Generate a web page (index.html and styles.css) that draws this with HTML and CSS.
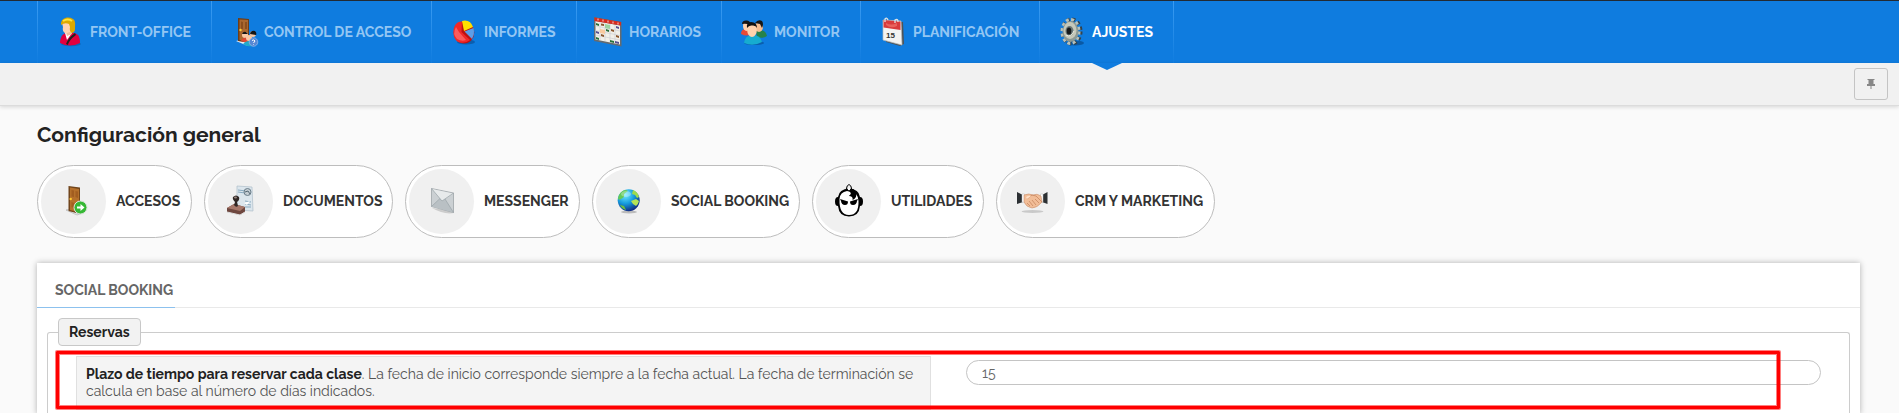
FILE: index.html
```html
<!DOCTYPE html>
<html lang="es">
<head>
<meta charset="utf-8">
<meta name="viewport" content="width=device-width, initial-scale=1">
<title>Configuración general</title>
<link rel="stylesheet" href="styles.css">
</head>
<body>
<nav class="topnav">
  <a class="nav-item" href="#">
    <svg class="icon" viewBox="0 0 32 32" aria-hidden="true">
      <ellipse cx="17" cy="28" rx="10" ry="2.200" fill="#08509a" opacity=".5"/>
      <path d="M6 27C6 22 8 18 12 17L20 17C25 18 26 22 26 27Q16 32 6 27Z" fill="#e3003f"/>
      <path d="M11 17L13 24L18 17Z" fill="#fff"/>
      <path d="M12 28Q14 22 21 17L22 19Q15 24 14 29Z" fill="#222"/>
      <path d="M11 13L18 12L18 18L13 20Z" fill="#f2bd99"/>
      <path d="M8 7Q14 2 19 7L18 14Q15 18 11 17Q8 15 9 11Z" fill="#ffd3b4"/>
      <path d="M7 8C7 2 14 0 19 3C22 5 21 9 21 13Q21 16 18 17Q15 15 16 11L15 8Q11 6 7 9Z" fill="#dca900"/>
      <path d="M9 5Q14 2 18 5" stroke="#ffe43b" stroke-width="2" fill="none"/>
    </svg>
    <span>FRONT-OFFICE</span></a>
  <a class="nav-item" href="#">
    <svg class="icon" viewBox="0 0 32 32" aria-hidden="true">
      <path d="M8 25L20 30L24 28L13 24Z" fill="#e8eef2"/>
      <path d="M10 2L21 3V27L10 25Z" fill="#6f3d17"/>
      <path d="M11.500 3.500L20 4V26L11.500 24Z" fill="#a9672f"/>
      <path d="M13 5.500L15 6V13H13ZM17 6H19V13H17Z" fill="#8b4e1e"/>
      <circle cx="12.500" cy="14" r="1.200" fill="#ffcf33"/>
      <circle cx="17" cy="19" r="3" fill="#f9c8a4"/><path d="M14 18Q15 15 18 16L20 18Z" fill="#151515"/>
      <circle cx="25" cy="18" r="3" fill="#f9c8a4"/><path d="M22 18Q23 14 27 15Q29 17 28 19Z" fill="#151515"/>
      <path d="M13 25Q15 21 19 22L19 27Z" fill="#df4934"/>
      <circle cx="21" cy="22" r="3" fill="#f9c8a4"/>
      <path d="M15 28Q19 23 25 26L24 30Q18 31 15 28Z" fill="#21aacc"/>
      <circle cx="25.500" cy="26" r="4.300" fill="#5788d4" stroke="#a8c5ee" stroke-width=".6"/>
      <path d="M24 24.500Q26 23 27 25L25.500 27M25.500 28.500V29" stroke="#fff" fill="none"/>
    </svg>
    <span>CONTROL DE ACCESO</span></a>
  <a class="nav-item" href="#">
    <svg class="icon" viewBox="0 0 32 32" aria-hidden="true">
      <ellipse cx="18" cy="26" rx="9" ry="2.500" fill="#07427f" opacity=".5"/>
      <ellipse cx="16" cy="16.500" rx="10.300" ry="11" fill="#bd1111"/>
      <path d="M14 5.500C3 5 3 25 12 26.500Q18 27.500 22 24L13.500 16Z" fill="#f22727"/>
      <path d="M8 11Q4 18 9 23Q14 26 18 24L11 16Z" fill="#ff7474" opacity=".7"/>
      <path d="M14 5Q22 3 25 11L16 15Z" fill="#ffdf00"/>
      <path d="M25.500 12Q27 18 24 23L16.500 15.500Z" fill="#5d9ee8"/>
    </svg>
    <span>INFORMES</span></a>
  <a class="nav-item" href="#">
    <svg class="icon" viewBox="0 0 32 32" aria-hidden="true">
      <path d="M1 1L28.500 6V30.500L1 25Z" fill="#656b70"/>
      <path d="M2.500 5L27 9.500V28.500L2.500 23.500Z" fill="#f2f0e9"/>
      <path d="M1.500 1.500L28 6V9.500L1.500 5Z" fill="#d62c20"/>
      <path d="M5 2.500V4.500M10 3.500V5.500M15 4.500V6.500M20 5.500V7.500M25 6.500V8.500" stroke="#fff" stroke-width=".8"/>
      <path d="M7 6V24M12 7V25M17 8V26M22 9V27M2.500 10L27 15M2.500 14.500L27 19.500M2.500 19L27 24" stroke="#c8cbd2" stroke-width=".6"/>
      <path d="M3 7L6 8V10L3 9ZM13 13L16 14V16L13 15ZM3 21L6 22V24L3 23ZM17 24L21 25V27L17 26Z" fill="#28713c"/>
      <path d="M8 7.500L11 8V10L8 9.500ZM18 13L21 14V16L18 15ZM8 18L11 19V21L8 20ZM23 19L26 20V22L23 21Z" fill="#8c582f"/>
      <path d="M23 10L26 11V13L23 12ZM3 15L6 16V18L3 17ZM22 25L26 26V28L22 27Z" fill="#564f91"/>
      <path d="M12 8L17 9V13L12 12Z" fill="#9cd3a1"/><path d="M7 13L12 14V18L7 17Z" fill="#f8caa0"/>
    </svg>
    <span>HORARIOS</span></a>
  <a class="nav-item" href="#">
    <svg class="icon" viewBox="0 0 32 32" aria-hidden="true">
      <ellipse cx="16" cy="27" rx="10" ry="2" fill="#08427b" opacity=".5"/>
      <path d="M3 18Q3 13 8 13L13 18Q9 21 3 18Z" fill="#e84a35"/>
      <path d="M18 15Q27 12 29 20Q25 23 19 21Z" fill="#26824b"/>
      <ellipse cx="8.500" cy="10" rx="3.500" ry="5" fill="#ffd1ac"/>
      <path d="M4 8Q4 4 9 4.500Q13 5 12 9Q8 7 4 8Z" fill="#161616"/>
      <ellipse cx="21" cy="11" rx="4" ry="5" fill="#f7bd90"/>
      <path d="M17 7Q20 3 24 5Q26 8 24 12Q23 10 22 8Z" fill="#161616"/>
      <path d="M6 27Q7 20 13 19Q22 18 24 26Q15 31 6 27Z" fill="#16acd0"/>
      <ellipse cx="14" cy="14.500" rx="4.800" ry="6.500" fill="#ffd2ad"/>
      <path d="M9 12Q8 6.500 13 6Q19 6 19 12Q18 9 14 9.500Q11 9 9 12Z" fill="#111"/>
    </svg>
    <span>MONITOR</span></a>
  <a class="nav-item" href="#">
    <svg class="icon" viewBox="0 0 32 32" aria-hidden="true">
      <path d="M9 5L26 6L27 28L23 30L9 26Z" fill="#4d5358"/>
      <path d="M6 4L24 5L25 29L6 24Z" fill="#f3f3f2" stroke="#b8bbbc" stroke-width=".7"/>
      <path d="M6.500 4L23.500 5.500V14L6.500 11.500Z" fill="#d83b3c"/>
      <path d="M9 7Q14 10 20 7V10Q14 13 9 9Z" fill="#e8625c"/>
      <path d="M8 6V3Q10 1 11 4M18 7V4Q21 2 21 6" fill="none" stroke="#dfe3e5" stroke-width="1.300"/>
      <text class="date" x="9" y="22">15</text>
    </svg>
    <span>PLANIFICACIÓN</span></a>
  <a class="nav-item active" href="#" aria-current="page">
    <svg class="icon" viewBox="0 0 32 32" aria-hidden="true">
      <ellipse cx="19" cy="27" rx="9" ry="2.500" fill="#07427f" opacity=".6"/>
      <ellipse cx="15.500" cy="15.500" rx="9" ry="12" fill="none" stroke="#354249" stroke-width="4" stroke-dasharray="3 2.570"/>
      <ellipse cx="14.500" cy="15.500" rx="8.500" ry="12" fill="none" stroke="#b7c1bb" stroke-width="3" stroke-dasharray="3 2.440"/>
      <ellipse cx="14.500" cy="15.500" rx="8" ry="10.500" fill="#8b9995"/>
      <ellipse cx="14" cy="14.500" rx="6.500" ry="8.500" fill="#c5c8ba"/>
      <ellipse cx="13.500" cy="15" rx="4" ry="5" fill="#687575"/>
      <ellipse cx="13" cy="15" rx="2.300" ry="3.500" fill="#16191a"/>
      <path d="M10 19Q15 22 18 15" stroke="#eef0e4" fill="none"/>
    </svg>
    <span>AJUSTES</span></a>
</nav>
<div class="subbar">
  <button class="pin" type="button" aria-label="Fijar menú">
    <svg viewBox="0 0 8 10" aria-hidden="true"><path d="M.5 0H7.500V1H6.500V5H8V7H4.500V10H3.500V7H0V5H1.500V1H.5Z" fill="#888"/></svg>
  </button>
</div>
<main class="page">
  <h1 class="title">Configuración general</h1>
  <div class="pills">
    <a class="pill" href="#"><span class="disc">
      <svg class="icon" viewBox="0 0 32 32" aria-hidden="true">
        <path d="M8 24L19 29L25 27L13 23Z" fill="#e5e8ea" stroke="#aaa" stroke-width=".6"/>
        <path d="M10.500 0L22 1.500V28L10.500 25Z" fill="#71451c"/>
        <path d="M12 1.500L21 3V26.500L12 24Z" fill="#b5702b"/>
        <path d="M13.500 4L16 4.500V11L13.500 10.500ZM17.500 5L20 5.500V12L17.500 11ZM13.500 16L16 17V22L13.500 21Z" fill="#a25d20"/>
        <circle cx="12.700" cy="13" r="1.200" fill="#ffc930"/>
        <circle cx="22.500" cy="21.500" r="6.500" fill="#35b834" stroke="#d9e4d8"/>
        <path d="M19 20.500H22.500V18L26.500 21.500L22.500 25V22.500H19Z" fill="#fff"/>
      </svg></span><span>ACCESOS</span></a>
    <a class="pill" href="#"><span class="disc">
      <svg class="icon" viewBox="0 0 32 32" aria-hidden="true">
        <path d="M12 0L27 1L28 25L12 24Z" fill="#dce6ed" stroke="#aebdc8" stroke-width=".7"/>
        <path d="M13 4L21 5M13 6L20 7M20 15L26 16M20 18L26 19M20 21L26 21" stroke="#89aac0"/>
        <circle cx="22.500" cy="6" r="3.500" fill="#c5ced4" stroke="#6b7e8a"/><path d="M20 6L23 5L25 8" stroke="#556874" fill="none"/>
        <path d="M19 17L25 15L22 19Z" fill="#fff"/>
        <path d="M2 22L9 18L20 21V26L15 29L2 26Z" fill="#6e473f"/>
        <path d="M2 22L9 18L20 21L15 25Z" fill="#a7786b"/><path d="M2 26L15 29L20 26" stroke="#ddd" fill="none"/>
        <path d="M9 19L10 16Q7 13 8 11Q11 8 14 11Q15 14 12 16L13 20Q11 22 9 19Z" fill="#302725"/>
        <ellipse cx="10.500" cy="11.500" rx="1.500" ry="1" fill="#94837d"/>
      </svg></span><span>DOCUMENTOS</span></a>
    <a class="pill" href="#"><span class="disc">
      <svg class="icon" viewBox="0 0 32 32" aria-hidden="true">
        <path d="M6 22Q18 29 28 27L27 25Z" fill="#ccc"/>
        <path d="M5.500 2.500L27.500 7V26.500L5.500 20.500Z" fill="#cbd0d3" stroke="#959ca0" stroke-width=".7"/>
        <path d="M6 3L16 15L27 7.500Z" fill="#e7eaeb"/>
        <path d="M5.500 20.500L14 12.500L16 15L19 13L27.500 26.500Z" fill="#b9c0c4"/>
        <path d="M5.500 2.500L16 15L27.500 7M5.500 20.500L14 12.500M27.500 26.500L19 13" stroke="#9aa3a8" fill="none" stroke-width=".7"/>
      </svg></span><span>MESSENGER</span></a>
    <a class="pill" href="#"><span class="disc">
      <svg class="icon" viewBox="0 0 32 32" aria-hidden="true">
        <defs><radialGradient id="sea" cx=".35" cy=".25" r=".8"><stop offset="0" stop-color="#75edff"/><stop offset=".5" stop-color="#169dde"/><stop offset="1" stop-color="#10237c"/></radialGradient></defs>
        <ellipse cx="16" cy="26" rx="8" ry="1.500" fill="#bbb"/>
        <circle cx="15.700" cy="14.200" r="11" fill="url(#sea)"/>
        <path d="M6 9Q9 4 13 4L15 5L11 8L11 11L8 13Q5 15 5 12Z" fill="#64c958"/>
        <path d="M20 4Q25 6 26 11L24 12L22 9L19 8Z" fill="#9edb4d"/>
        <path d="M18 15L23 13L26 15Q25 19 23 20L20 18Z" fill="#b5e356"/>
        <path d="M7 19L11 20L13 24Q9 23 7 19Z" fill="#69bd3d"/>
        <ellipse cx="13" cy="8" rx="5" ry="3" fill="#fff" opacity=".3"/>
      </svg></span><span>SOCIAL BOOKING</span></a>
    <a class="pill" href="#"><span class="disc">
      <svg class="icon" viewBox="0 0 32 32" aria-hidden="true">
        <path d="M13 4Q14 -1.500 16 -1.500Q18 -1.500 19 4" fill="none" stroke="#000"/>
        <path d="M5 11Q6 3 16 2.500Q26 3 27 11Q30 11 30 15.500Q30 20 27 20Q26 30.500 16 30.500Q6 30.500 5 20Q2 20 2 15.500Q2 11 5 11Z" fill="#000"/>
        <path d="M6.500 13Q7 6 14 5L18 6Q19 8 16 10Q20 9.500 20 13Q24 12 23 8Q25.500 11 25.500 15Q26 29 16 29Q6 29 6.500 13Z" fill="#fff"/>
        <path d="M15 3H20Q24 6 23 10Q22 13 19.500 14Q20.500 10 16 10Q19 8 17 6Z" fill="#000"/>
        <path d="M7 13L15 15.500Q15 19 12 19Q8.500 19 8 15ZM25 13L17 15.500Q17 19 20 19Q23.500 19 24 15Z" fill="#000"/>
        <circle cx="16" cy="3" r="1.200" fill="#fff"/>
      </svg></span><span>UTILIDADES</span></a>
    <a class="pill" href="#"><span class="disc">
      <svg class="icon" viewBox="0 0 32 32" aria-hidden="true">
        <ellipse cx="15.500" cy="25.500" rx="11" ry="1.500" fill="#c9c9c9"/>
        <path d="M0 6L6 9V16L0 18ZM30.500 6L25 9V16L30.500 18Z" fill="#2c3033"/>
        <path d="M5 8L7.500 8V16.500L5 16ZM26 8L23.500 8V16.500L26 16Z" fill="#fff" stroke="#bbb" stroke-width=".5"/>
        <path d="M7 9Q12 7 16 9Q20 7 24 10L25 16Q20 22 15 22Q9 21 7 16Z" fill="#f2bd97" stroke="#c98e6c" stroke-width=".6"/>
        <path d="M10 13L15 9L19 10L25 16M10 17L13 20M12 15L16 20M15 14L19 19M18 13L22 17" fill="none" stroke="#b9754f" stroke-width=".6"/>
        <path d="M9 11Q12 9 14 10L10 13Z" fill="#ffe0c7"/>
      </svg></span><span>CRM Y MARKETING</span></a>
  </div>
  <section class="panel">
    <div class="tabs"><a class="tab" href="#">SOCIAL BOOKING</a></div>
    <fieldset class="group">
      <legend class="legend">Reservas</legend>
      <div class="row">
        <label class="field-label" for="plazo"><strong>Plazo de tiempo para reservar cada clase</strong>. La fecha de inicio corresponde siempre a la fecha actual. La fecha de terminación se calcula en base al número de días indicados.</label>
        <input class="field" id="plazo" type="text" value="15">
        <div class="highlight"></div>
      </div>
    </fieldset>
  </section>
</main>
</body>
</html>
```
FILE: styles.css
```css
* { box-sizing: border-box; }
body {
  margin: 0;
  background: #fafafa;
  color: #222;
  font-family: Raleway, Lato, "Open Sans", sans-serif;
  font-size: 14px;
  line-height: 17px;
}
a { color: inherit; text-decoration: none; }
.icon { display: block; flex: none; width: 32px; height: 32px; overflow: visible; }
.date { font: bold 8px "Liberation Sans", sans-serif; fill: #333; }

.topnav {
  display: grid;
  grid-template-columns: 174px 220px 145px 145px 139px 179px 135px;
  height: 63px;
  padding-left: 37px;
  background: #0f7cdf;
  border-top: 1px solid #222a33;
}
.nav-item {
  position: relative;
  display: flex;
  align-items: center;
  gap: 4px;
  padding-left: 16px;
  border-left: 1px solid;
  border-image: linear-gradient(#3b9cf2, #0f7cdf) 1;
  color: #93c6f3;
  font-weight: 700;
  white-space: nowrap;
}
.nav-item:last-child { border-right: 1px solid; }
.nav-item.active { color: #fff; }
.nav-item.active::after {
  content: "";
  position: absolute;
  top: 100%;
  left: calc(50% - 15px);
  border: 15px solid transparent;
  border-top: 7px solid #0f7cdf;
  border-bottom: 0;
}

.subbar {
  display: flex;
  justify-content: flex-end;
  align-items: center;
  height: 43px;
  padding-right: 11px;
  background: #f1f1f1;
  border-bottom: 1px solid #dcdcdc;
  box-shadow: 0 1px 4px rgba(0, 0, 0, .15);
}
.pin {
  display: flex;
  align-items: center;
  justify-content: center;
  width: 34px;
  height: 32px;
  padding: 0;
  background: #f1f1f1;
  border: 1px solid #c4c4c4;
  border-radius: 3px;
}
.pin svg { width: 8px; height: 10px; }

.page { padding: 16px 39px 0 37px; }
.title { margin: 0 0 17px; font-size: 21px; line-height: 26px; font-weight: 700; }

.pills {
  display: grid;
  grid-template-columns: 155px 189px 175px 208px 172px 219px;
  gap: 12px;
}
.pill {
  display: flex;
  align-items: center;
  gap: 10px;
  padding: 3px;
  background: #fff;
  border: 1px solid #bdbdbd;
  border-radius: 37px;
  color: #333;
  font-weight: 700;
  white-space: nowrap;
}
.disc {
  display: grid;
  place-items: center;
  flex: none;
  width: 65px;
  height: 65px;
  border-radius: 50%;
  background: #f0f0f0;
}

.panel {
  margin-top: 25px;
  background: #fff;
  box-shadow: 0 0 6px rgba(0, 0, 0, .3);
}
.tabs { display: flex; border-bottom: 1px solid #e9e9e9; }
.tab {
  min-width: 138px;
  margin-bottom: -1px;
  padding: 19px 2px 8px 18px;
  border-bottom: 1px solid #8cc1ee;
  color: #666;
  font-weight: 700;
}
.group {
  min-width: 0;
  margin: 10px 10px 0;
  padding: 10px 28px 4px;
  border: 1px solid #ccc;
  border-bottom: 0;
  border-radius: 3px 3px 0 0;
}
.legend {
  margin-left: -18px;
  padding: 5px 10px;
  background: #f2f2f2;
  border: 1px solid #c8c8c8;
  border-radius: 4px;
  line-height: 16px;
  font-weight: 700;
}
.row {
  position: relative;
  display: grid;
  grid-template-columns: 1fr 1fr;
  gap: 35px;
  align-items: start;
}
.field-label {
  padding: 9px;
  background: #f4f4f4;
  border: 1px solid #e0e0e0;
  color: #555;
}
.field-label strong { color: #222; }
.field {
  width: 100%;
  height: 25px;
  margin-top: 4px;
  padding: 0 15px;
  background: #fff;
  border: 1px solid #c4c4c4;
  border-radius: 13px;
  color: #666;
  font: inherit;
}
.highlight {
  position: absolute;
  inset: -5px 41px 1px -20px;
  border: 3px solid #f00;
  border-radius: 1px;
  box-shadow: 0 0 0 1px rgba(255, 0, 0, .5), inset 0 0 0 1px rgba(255, 0, 0, .5);
  pointer-events: none;
}
```
